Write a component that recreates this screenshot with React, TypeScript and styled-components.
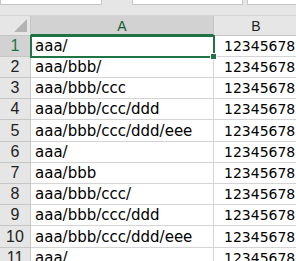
import styled, { createGlobalStyle } from "styled-components";

const GlobalStyle = createGlobalStyle`
  html, body {
    margin: 0;
    padding: 0;
    background: #ffffff;
    overflow: hidden;
  }
`;

const Sheet = styled.div`
  width: 296px;
  height: 261px;
  overflow: hidden;
  background: #ffffff;
  font-family: "DejaVu Sans", "Noto Sans CJK JP", sans-serif;
`;

// the bottom edge of the name box / formula bar
const TopStrip = styled.div`
  height: 16px;
  background: #e6e6e6;
  border-bottom: 1px solid #d4d4d4;
  box-sizing: border-box;
`;

const BoxRow = styled.div`
  display: flex;
  height: 5px;
`;

const BarBox = styled.div<{ $w: number; $ml?: number }>`
  width: ${(p) => p.$w}px;
  margin-left: ${(p) => p.$ml || 0}px;
  flex-shrink: 0;
  background: #ffffff;
  border: 1px solid #c6c6c6;
  border-top: none;
  box-sizing: border-box;
`;

// rows are ~21.2px apart in the shot, so every fifth row is a pixel taller
const Grid = styled.div`
  display: grid;
  grid-template-columns: 31px 183px 85px;
  grid-template-rows: 20px repeat(2, 21px 21px 21px 21px 22px) 21px;
`;

const Corner = styled.div`
  background: #e6e6e6;
  border-right: 1px solid #c6c6c6;
  border-bottom: 1px solid #c6c6c6;
  box-sizing: border-box;
  display: flex;
  align-items: flex-end;
  justify-content: flex-end;
  padding: 0 3px 3px 0;

  span {
    width: 0;
    height: 0;
    border-left: 13px solid transparent;
    border-bottom: 13px solid #b4b4b4;
  }
`;

const ColHead = styled.div<{ $active?: boolean }>`
  background: ${(p) => (p.$active ? "#d2d2d2" : "#e6e6e6")};
  border-right: 1px solid #c6c6c6;
  border-bottom: ${(p) => (p.$active ? "2px solid #217346" : "1px solid #c6c6c6")};
  box-sizing: border-box;
  display: flex;
  align-items: center;
  justify-content: center;
  font-family: "Liberation Sans", Arial, sans-serif;
  font-size: 14px;
  color: ${(p) => (p.$active ? "#185c37" : "#222222")};
  padding-top: 1px;
`;

const RowHead = styled.div<{ $active?: boolean }>`
  background: ${(p) => (p.$active ? "#d2d2d2" : "#e6e6e6")};
  border-right: 1px solid #c6c6c6;
  border-bottom: 1px solid #c6c6c6;
  box-sizing: border-box;
  display: flex;
  align-items: center;
  justify-content: center;
  font-family: "Liberation Sans", Arial, sans-serif;
  font-size: 16px;
  color: ${(p) => (p.$active ? "#217346" : "#222222")};
`;

const Cell = styled.div<{ $num?: boolean }>`
  border-right: 1px solid #d4d4d4;
  border-bottom: 1px solid #d4d4d4;
  box-sizing: border-box;
  display: flex;
  align-items: center;
  padding-left: ${(p) => (p.$num ? 10 : 4)}px;
  white-space: nowrap;
  overflow: hidden;
  font-size: ${(p) => (p.$num ? 14 : 15)}px;
  color: #000000;
`;

const ActiveCell = styled.div`
  position: relative;
  border-bottom: 1px solid #d4d4d4;
  box-sizing: border-box;
`;

const ActiveText = styled.div`
  height: 100%;
  display: flex;
  align-items: center;
  padding-left: 4px;
  font-size: 15px;
  white-space: nowrap;
`;

const Selection = styled.div`
  position: absolute;
  left: -1px;
  top: -1px;
  right: -1px;
  bottom: -2px;
  border: 2px solid #217346;
  pointer-events: none;
`;

const FillHandle = styled.div`
  position: absolute;
  right: -4px;
  bottom: -4px;
  width: 5px;
  height: 5px;
  background: #217346;
  border: 1px solid #ffffff;
`;

const rows = [
  "aaa/",
  "aaa/bbb/",
  "aaa/bbb/ccc",
  "aaa/bbb/ccc/ddd",
  "aaa/bbb/ccc/ddd/eee",
  "aaa/",
  "aaa/bbb",
  "aaa/bbb/ccc/",
  "aaa/bbb/ccc/ddd",
  "aaa/bbb/ccc/ddd/eee",
  "aaa/",
];

const App = () => {
  return (
    <>
      <GlobalStyle />
      <Sheet>
        <TopStrip>
          <BoxRow>
            <BarBox $w={102} />
            <BarBox $w={111} $ml={30} />
            <BarBox $w={60} $ml={4} />
          </BoxRow>
        </TopStrip>
        <Grid>
          <Corner>
            <span />
          </Corner>
          <ColHead $active>A</ColHead>
          <ColHead>B</ColHead>
          {rows.map((text, i) => (
            <>
              <RowHead key={"h" + i} $active={i === 0}>
                {i + 1}
              </RowHead>
              {i === 0 ? (
                <ActiveCell key={"a" + i}>
                  <ActiveText>{text}</ActiveText>
                  <Selection>
                    <FillHandle />
                  </Selection>
                </ActiveCell>
              ) : (
                <Cell key={"a" + i}>{text}</Cell>
              )}
              <Cell key={"b" + i} $num>
                12345678
              </Cell>
            </>
          ))}
        </Grid>
      </Sheet>
    </>
  );
};

export default App;
